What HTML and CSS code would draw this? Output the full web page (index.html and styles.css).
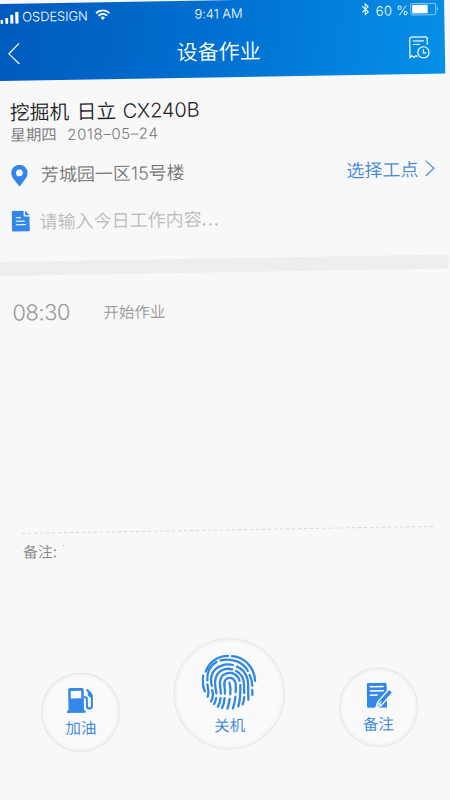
FILE: index.html
```html
<!DOCTYPE html>
<html lang="zh-CN">
<head>
<meta charset="utf-8">
<title>设备作业</title>
<link rel="stylesheet" href="styles.css">
</head>
<body>
<main class="screen">
  <header class="header">
    <div class="status">
      <div class="carrier">
        <svg width="19" height="12" viewBox="0 0 19 12" fill="#fff"><rect y="8" width="2.6" height="4" rx=".8"/><rect x="5" y="6" width="2.8" height="6" rx=".8"/><rect x="10" y="3" width="3" height="9" rx=".8"/><rect x="15" width="3.2" height="12" rx=".8"/></svg>
        <span class="carrier-name">OSDESIGN</span>
        <svg class="wifi" width="15" height="11" viewBox="0 0 15 11" fill="none" stroke="#fff" stroke-width="1.8"><path d="M.8 4C4.5.2 10.500 .2 14.200 4M3.200 6.500C5.700 4 9.300 4 11.800 6.500"/><path d="M5.300 8.300Q7.500 6.400 9.700 8.300L7.500 10.700Z" fill="#fff" stroke="none"/></svg>
      </div>
      <span class="clock">9:41 AM</span>
      <div class="power">
        <svg class="bluetooth" width="8" height="13" viewBox="0 0 8 13" fill="none" stroke="#fff"><path d="M1 3.500L7 9L4 11.800V1L7 4L1 9.500"/></svg>
        <span class="percent">60 %</span>
        <svg class="battery" width="29" height="13" viewBox="0 0 29 13"><rect x=".5" y=".5" width="25" height="11.500" rx="2" fill="none" stroke="#9bcaf0"/><rect x="2" y="2" width="15.500" height="8.500" rx=".8" fill="#fff"/><path d="M27 4Q29 6 27 8.500Z" fill="#9bcaf0"/></svg>
      </div>
    </div>
    <nav class="nav">
      <svg class="back" width="12" height="22" viewBox="0 0 12 22" fill="none" stroke="#fff" stroke-width="1.200"><path d="M11.300 .7L1 11L11.300 21.300"/></svg>
      <h1 class="nav-title">设备作业</h1>
      <svg class="records" width="21" height="23" viewBox="0 0 21 23" fill="none" stroke="#fff" stroke-width="1.200"><path d="M18.500 9V3Q18.500 1 16.500 1H3Q1 1 1 3V21.500L3 19.700L5 21.500L7 19.700L8.500 21M4 5H15M4 8.500H11"/><circle cx="14.500" cy="16.500" r="5.600"/><path d="M14.500 13.500V17H17.300"/></svg>
    </nav>
  </header>
  <section class="machine">
    <h2 class="machine-name">挖掘机 日立 <span class="model">CX240B</span></h2>
    <p class="date">星期四 <span class="day">2018–05–24</span></p>
    <div class="row place">
      <svg width="17" height="22" viewBox="0 0 17 22"><path fill="#3287e8" fill-rule="evenodd" d="M8.500 0A8.200 8.200 0 0 1 16.700 8.200C16.700 13 12 17 8.500 22C5 17 .3 13 .3 8.200A8.200 8.200 0 0 1 8.500 0ZM8.500 4.800A3.400 3.400 0 1 0 8.500 11.600A3.400 3.400 0 1 0 8.500 4.800Z"/></svg>
      <span class="place-name">芳城园一区<span class="digits">15</span>号楼</span>
      <span class="choose">选择工点</span>
      <svg width="10" height="17" viewBox="0 0 10 17" fill="none" stroke="#4189d4" stroke-width="1.200"><path d="M.8 .8L9 8.500L.8 16.200"/></svg>
    </div>
    <div class="row task">
      <svg width="18" height="21" viewBox="0 0 18 21"><path fill="#3287e8" d="M1.500 0H12V4.500Q12 6 13.500 6H18V19.500Q18 21 16.500 21H1.500Q0 21 0 19.500V1.500Q0 0 1.500 0ZM13.500 0L18 4.700H13.500Z"/><path d="M4 7H9M4 10.500H13M4 14H14" stroke="#fff" stroke-width="1.200"/></svg>
      <span class="hint">请输入今日工作内容<span class="dots">...</span></span>
    </div>
  </section>
  <div class="band"></div>
  <section class="log">
    <time class="time">08:30</time>
    <span class="event">开始作业</span>
  </section>
  <svg class="divider" width="414" height="2" viewBox="0 0 414 2"><path d="M0 .6H414" stroke="#dcdcdc" stroke-width="1.200" stroke-dasharray="3.500 2.500"/></svg>
  <p class="remark">备注:<span class="tick"></span></p>
  <footer class="actions">
    <button class="action">
      <svg class="pump" width="27" height="26" viewBox="0 0 27 26"><path fill="#3287e8" fill-rule="evenodd" d="M3.500 0H14.500Q17 0 17 2.500V22.500H18.500V25H0V22.500H1.500V2Q1.500 0 3.500 0ZM4 3V10.500H14.500V3Z"/><path fill="none" stroke="#3287e8" stroke-width="2" d="M17 9.500H18.500Q20 9.500 20 11V18Q20 21 22.500 21T25 18V9Q25 7 23.500 5.500L20 1.800"/><path fill="#3287e8" d="M21 3L25.500 6.500V10.500Q21.500 10 21 7Z"/></svg>
      <span>加油</span>
    </button>
    <button class="action main">
      <svg class="finger" width="55" height="56" viewBox="112 72 162 165" fill="none" stroke="#3287e0" stroke-width="6.800" stroke-linecap="round">
        <path d="M125 122C135 94 161 77 191 77M203 78C243 82 268 114 270 152M261 178V193M117 134C114 151 115 166 121 180"/>
        <path d="M129 148C128 118 142 102 157 94M169 90C205 82 235 97 249 122M254 134C260 147 261 157 261 166M129 160C130 173 135 184 129 196"/>
        <path d="M142 164C135 137 146 113 172 105C184 101 195 101 205 104M217 109C241 120 250 142 249 168V207M143 177C147 192 144 202 139 210"/>
        <path d="M155 187C154 171 148 157 154 142C159 121 182 110 203 117M214 122C231 130 237 145 237 164V187M237 199C236 207 235 213 232 220M154 201C153 208 151 213 148 218"/>
        <path d="M168 188C169 168 162 158 168 145C171 137 176 132 182 130M185 129C203 123 220 133 224 151M226 164C226 185 226 206 219 226M167 201C166 211 163 219 159 226"/>
        <path d="M180 188C183 171 174 160 182 148C189 137 206 141 211 154C215 165 212 175 212 184M211 197C210 211 207 221 203 232M179 201C178 212 175 222 171 230"/>
        <path d="M194 156C198 170 197 184 196 190M194 204C192 215 190 224 187 232"/>
      </svg>
      <span>关机</span>
    </button>
    <button class="action">
      <svg class="note" width="27" height="27" viewBox="0 0 27 27"><path fill="#3287e8" d="M2 0H18Q20 0 20 2V25H2Q0 25 0 23V2Q0 0 2 0Z"/><path d="M3 4H17M3 8.200H17M3 12.400H11" stroke="#fff" stroke-width="1.500"/><path d="M8.500 26L10.500 19.500L22.500 6.500L26 10L14 23Z" fill="#3287e8" stroke="#fafafa" stroke-width="1.300"/><path d="M10.500 19.500L14 23M10 24L14.500 18.500" stroke="#fff"/></svg>
      <span>备注</span>
    </button>
  </footer>
</main>
</body>
</html>
```
FILE: styles.css
```css
* { box-sizing: border-box; }
html, body { margin: 0; height: 100%; overflow: hidden; background: #f8f8f8; }
body { font-family: "Noto Sans CJK SC", sans-serif; font-weight: 350; }
h1, h2, p { margin: 0; font-weight: 350; }
svg { display: block; flex: none; }

/* The whole screen sits at a slight counter-clockwise tilt. */
.screen {
  width: 451.500px;
  height: 800px;
  margin: 3.500px 0 0 -8px;
  transform: rotate(-0.97deg);
  transform-origin: 8px -3.500px;
}

.header { height: 76.500px; background: linear-gradient(100deg, #0059bd 0%, #0070d0 50%, #0590e8 100%); color: #fff; }
.status {
  display: grid;
  grid-template-columns: 1fr auto 1fr;
  align-items: center;
  height: 27px;
  padding: 0 5px 0 8px;
  font-family: Inter, "Liberation Sans", sans-serif;
  font-size: 12.500px;
  font-weight: 300;
  line-height: 27px;
}
.carrier { display: flex; align-items: center; }
.carrier-name { width: 76px; padding-left: 3px; font-size: 13px; letter-spacing: -.1px; }
.wifi { margin-top: -3px; }
.clock { margin-left: -2px; font-size: 13px; letter-spacing: -.1px; }
.power { display: flex; align-items: center; justify-content: flex-end; }
.bluetooth { margin: -4px 7px 0 0; }
.percent { width: 34px; font-size: 13px; white-space: nowrap; letter-spacing: .4px; }
.battery { margin-top: -3px; }
.nav { display: grid; grid-template-columns: 1fr auto 1fr; align-items: center; height: 46px; padding: 0 15px 0 15px; }
.nav-title { font-size: 21px; line-height: 30px; }
.records { justify-self: end; }

.machine { height: 181px; padding: 18px 12px 0 16px; }
.machine-name { height: 26px; font-size: 19.800px; line-height: 26px; color: #222; white-space: nowrap; word-spacing: 3px; }
.model { margin-left: -1px; font-family: Inter, "Liberation Sans", sans-serif; font-weight: 300; font-size: 20px; letter-spacing: -.1px; }
.date { height: 21px; font-size: 15.500px; line-height: 18px; color: #777; white-space: nowrap; }
.day { margin-left: 7px; font-family: Inter, "Liberation Sans", sans-serif; font-size: 15px; font-weight: 300; letter-spacing: .6px; }
.row { display: flex; align-items: center; }
.place { height: 24px; margin-top: 18px; font-size: 18px; color: #777; }
.place-name { margin-left: 13px; flex: 1; }
.digits { font-family: Inter, "Liberation Sans", sans-serif; font-weight: 300; }
.choose { margin-right: 6px; color: #4189d4; }
.task { height: 24px; margin-top: 22px; font-size: 18px; color: #bbb; }
.hint { margin-left: 10px; }
.dots { letter-spacing: 1.200px; }
.hint, .place-name, .choose { margin-top: -1px; line-height: 24px; white-space: nowrap; }

.band { height: 14.500px; background: #eee; }
.log { display: flex; align-items: center; height: 73px; padding-left: 15px; color: #999; }
.time { width: 91px; font-family: Inter, "Liberation Sans", sans-serif; font-size: 22px; font-weight: 300; letter-spacing: -.5px; }
.event { font-size: 15.500px; }
.divider { margin: 184px 0 0 21px; }
.remark { display: flex; height: 20px; margin: 7px 0 0 21.500px; font-size: 15px; line-height: 20px; color: #888; }
.tick { width: 1px; height: 1px; margin: 4px 0 0 6px; background: #999; }

.actions { display: flex; justify-content: space-between; align-items: center; height: 111px; margin-top: 79.500px; padding: 0 38px 0 37px; }
.action {
  display: flex;
  flex-direction: column;
  align-items: center;
  width: 79px;
  height: 79px;
  margin: 33px 0 0;
  padding: 14px 0 0;
  border: 1.500px solid #e7e7e7;
  border-radius: 50%;
  background: #fafafa;
  box-shadow: inset 0 0 4px #e9e9e9, 0 0 2px #eee;
  font: 350 15.500px/20px "Noto Sans CJK SC", sans-serif;
  color: #3585dc;
}
.action span { margin-top: 3px; }
.note { margin-left: 4px; }
.main { width: 111px; height: 111px; margin: 0; padding-top: 15px; }
.main .finger { margin-bottom: 1px; }
```
